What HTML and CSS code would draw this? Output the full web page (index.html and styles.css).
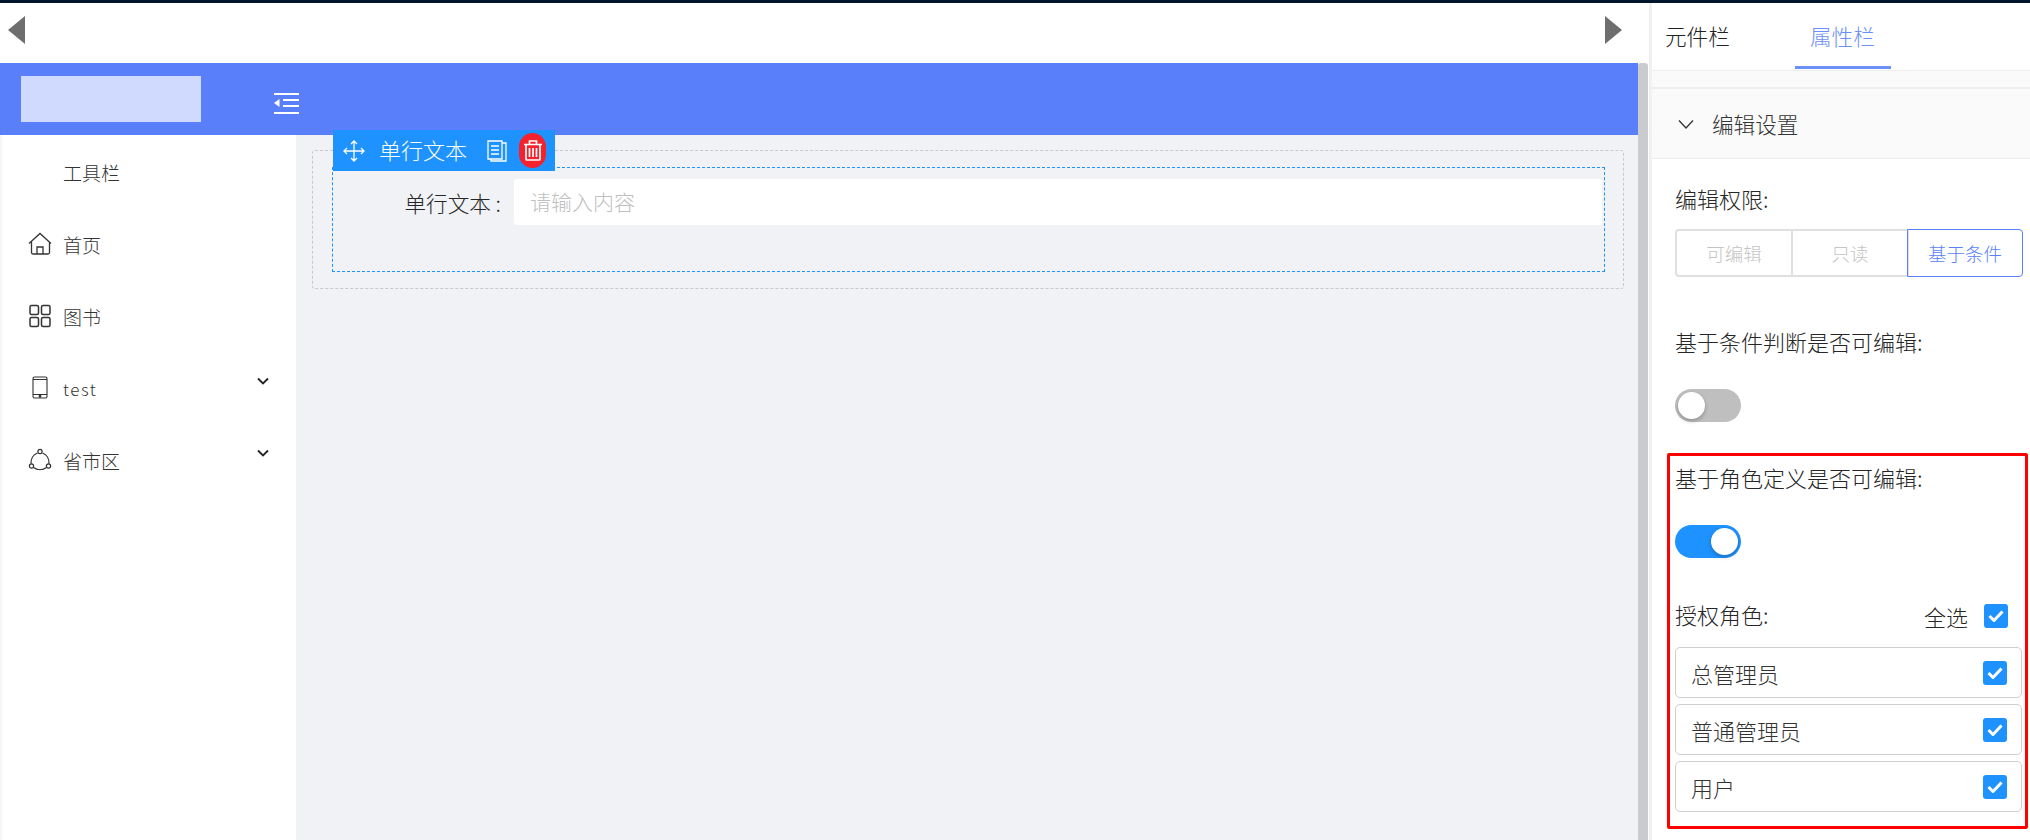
FILE: index.html
```html
<!DOCTYPE html>
<html lang="zh">
<head>
<meta charset="utf-8">
<title>表单设计</title>
<link rel="stylesheet" href="styles.css">
</head>
<body>
<div class="topline"></div>
<div class="app">
  <main class="stage">
    <div class="pager">
      <svg class="arrow" width="17" height="28" viewBox="0 0 17 28"><path d="M17 0V28L0 14Z" fill="#6e6e6e"/></svg>
      <svg class="arrow" width="17" height="28" viewBox="0 0 17 28"><path d="M0 0V28L17 14Z" fill="#6e6e6e"/></svg>
    </div>
    <div class="preview">
      <div class="preview-main">
        <header class="brandbar">
          <div class="logo"></div>
          <svg class="collapse" width="25" height="21" viewBox="0 0 25 21" fill="#fff">
            <rect x="0" y="0" width="25" height="2"/>
            <rect x="9" y="6" width="16" height="2"/>
            <rect x="9" y="12" width="16" height="2"/>
            <rect x="0" y="19" width="25" height="2"/>
            <path d="M5.5 6V14L0 10Z"/>
          </svg>
        </header>
        <div class="workspace">
          <nav class="sidebar">
            <div class="nav-item"><span class="nav-icon"></span><span class="nav-text">工具栏</span></div>
            <div class="nav-item">
              <svg class="nav-icon" viewBox="0 0 24 24" fill="none" stroke="#333" stroke-width="1.3"><path d="M1 11.5 12 1.5l11 10M3.5 10v10.5a1.5 1.5 0 0 0 1.500 1.500h15a1.500 1.500 0 0 0 1.500-1.500V10M9 22v-7h6v7"/></svg>
              <span class="nav-text">首页</span>
            </div>
            <div class="nav-item">
              <svg class="nav-icon" viewBox="0 0 24 24" fill="none" stroke="#333" stroke-width="1.500"><rect x="2" y="1.500" width="8.500" height="9" rx="1.500"/><rect x="13.500" y="1.500" width="8.500" height="9" rx="1.500"/><rect x="2" y="13.500" width="8.500" height="9" rx="1.500"/><rect x="13.500" y="13.500" width="8.500" height="9" rx="1.500"/></svg>
              <span class="nav-text">图书</span>
            </div>
            <div class="nav-item">
              <svg class="nav-icon" viewBox="0 0 24 24" fill="none" stroke="#333" stroke-width="1.100"><rect x="5" y="1" width="14" height="21" rx="1.500"/><path d="M5 3.500h14M5 18.500h14"/><circle cx="12" cy="20.300" r=".9" fill="#333"/></svg>
              <span class="nav-text nav-latin">test</span>
              <svg class="caret" width="12" height="8" viewBox="0 0 12 8" fill="none" stroke="#222" stroke-width="1.800"><path d="M1 1.500 6 6.500l5-5"/></svg>
            </div>
            <div class="nav-item">
              <svg class="nav-icon" viewBox="0 0 24 24" fill="none" stroke="#333" stroke-width="1.200"><circle cx="12" cy="3.500" r="2.100"/><circle cx="3.500" cy="18" r="2.100"/><circle cx="20.500" cy="18" r="2.100"/><path d="M9.500 5A10.500 10.500 0 0 0 3 15.800M14.500 5A10.500 10.500 0 0 1 21 15.800M5.500 19.500a10.500 10.500 0 0 0 13 0"/></svg>
              <span class="nav-text">省市区</span>
              <svg class="caret" width="12" height="8" viewBox="0 0 12 8" fill="none" stroke="#222" stroke-width="1.800"><path d="M1 1.500 6 6.500l5-5"/></svg>
            </div>
          </nav>
          <section class="canvas">
            <div class="drop-zone">
              <div class="field-box">
                <div class="field-tools">
                  <svg width="22" height="22" viewBox="0 0 22 22" fill="none" stroke="#fff" stroke-width="1.300"><path d="M11 1v20M1 11h20M8 4l3-3 3 3M8 18l3 3 3-3M4 8l-3 3 3 3M18 8l3 3-3 3"/></svg>
                  <span class="field-title">单行文本</span>
                  <svg class="copy-icon" width="20" height="22" viewBox="0 0 20 22" fill="none" stroke="#fff" stroke-width="1.300"><path d="M1 1h14v18H1zM15 3h4v18H4v-2M4 6h8M4 10h8M4 14h8"/></svg>
                  <span class="trash">
                    <svg width="18" height="21" viewBox="0 0 18 21" fill="none" stroke="#fff" stroke-width="1.700"><path d="M0 4.500h18M5.500 4.500V1h7v3.500M2 4.500V19a1 1 0 0 0 1 1h12a1 1 0 0 0 1-1V4.500M5.500 8v9M9 8v9M12.500 8v9"/></svg>
                  </span>
                </div>
                <div class="field-row">
                  <label class="field-label">单行文本 :</label>
                  <div class="field-input">请输入内容</div>
                </div>
              </div>
            </div>
          </section>
        </div>
      </div>
      <div class="scrollbar"></div>
    </div>
  </main>
  <aside class="panel">
    <div class="tabs">
      <span class="tab">元件栏</span>
      <span class="tab tab-active">属性栏</span>
    </div>
    <div class="strip"></div>
    <div class="group-head">
      <svg width="16" height="10" viewBox="0 0 16 10" fill="none" stroke="#333" stroke-width="1.300"><path d="M1 1.500 8 9l7-7.500"/></svg>
      <span>编辑设置</span>
    </div>
    <div class="group-body">
      <div class="prop-label">编辑权限:</div>
      <div class="segments">
        <span class="segment">可编辑</span>
        <span class="segment">只读</span>
        <span class="segment segment-on">基于条件</span>
      </div>
      <div class="prop-label cond-label">基于条件判断是否可编辑:</div>
      <div class="switch"><span class="knob"></span></div>
      <section class="role-box">
        <div class="prop-label">基于角色定义是否可编辑:</div>
        <div class="switch switch-on"><span class="knob"></span></div>
        <div class="role-head">
          <span class="prop-label">授权角色:</span>
          <span class="all"><span>全选</span>
            <span class="check"><svg width="16" height="12" viewBox="0 0 16 12" fill="none" stroke="#fff" stroke-width="3"><path d="M1.500 6 6 10.500 14.500 1.500"/></svg></span>
          </span>
        </div>
        <div class="role-row"><span>总管理员</span><span class="check"><svg width="16" height="12" viewBox="0 0 16 12" fill="none" stroke="#fff" stroke-width="3"><path d="M1.500 6 6 10.500 14.500 1.500"/></svg></span></div>
        <div class="role-row"><span>普通管理员</span><span class="check"><svg width="16" height="12" viewBox="0 0 16 12" fill="none" stroke="#fff" stroke-width="3"><path d="M1.500 6 6 10.500 14.500 1.500"/></svg></span></div>
        <div class="role-row"><span>用户</span><span class="check"><svg width="16" height="12" viewBox="0 0 16 12" fill="none" stroke="#fff" stroke-width="3"><path d="M1.500 6 6 10.500 14.500 1.500"/></svg></span></div>
      </section>
    </div>
  </aside>
</div>
</body>
</html>
```

FILE: styles.css
```css
* { box-sizing: border-box; }
html, body { margin: 0; height: 100%; overflow: hidden; }
body {
  display: flex;
  flex-direction: column;
  background: #fff;
  color: #262626;
  font-family: "Noto Sans CJK SC", "Noto Sans", sans-serif;
  font-weight: 300;
}
.topline { height: 3px; background: #001529; flex: none; }
.app { flex: 1; display: flex; min-height: 0; }

.stage { width: 1650px; flex: none; display: flex; flex-direction: column; border-right: 1px solid #eee; }
.pager { height: 60px; flex: none; display: flex; align-items: center; justify-content: space-between; padding: 0 27px 6px 8px; }
.preview { flex: 1; display: flex; min-height: 0; }
.preview-main { flex: 1; display: flex; flex-direction: column; min-width: 0; }
.scrollbar { width: 10px; margin-right: 1px; background: #c9cbcf; border-radius: 3px 3px 0 0; }

.brandbar { height: 72px; flex: none; background: #5a7ffa; display: flex; align-items: center; padding-left: 21px; }
.logo { width: 180px; height: 46px; background: #d0daff; }
.collapse { margin: 9px 0 0 73px; }

.workspace { flex: 1; display: flex; min-height: 0; }
.sidebar { width: 296px; flex: none; background: #fff; border-left: 2px solid #f6f6f6; padding-top: 1px; }
.nav-item { height: 72px; display: flex; align-items: center; padding-left: 26px; position: relative; font-size: 19px; color: #333; }
.nav-icon { width: 24px; height: 24px; flex: none; margin-right: 11px; }
.nav-latin { letter-spacing: 1.500px; font-size: 17px; }
.caret { position: absolute; left: 255px; top: 25px; }

.canvas { flex: 1; background: #f0f2f5; padding: 15px 14px 15px 16px; min-width: 0; }
.drop-zone { height: 139px; border: 1px dashed #c8c8c8; border-radius: 3px; padding: 16px 18px 0 19px; }
.field-box { height: 105px; border: 1px dashed #1e92ff; position: relative; padding-top: 11px; }
.field-tools {
  position: absolute; left: 0; top: -38px;
  width: 222px; height: 41px;
  background: #1e92ff; color: #fff;
  display: flex; align-items: center;
  padding-left: 10px;
  font-size: 22px;
}
.field-title { margin-left: 14px; line-height: 38px; height: 41px; }
.copy-icon { margin-left: 20px; }
.trash {
  margin-left: 12px; width: 27px; height: 35px;
  background: #f5222d; border-radius: 14px;
  display: flex; align-items: center; justify-content: center;
}
.field-row { display: flex; align-items: center; }
.field-label { width: 181px; text-align: right; font-size: 21.6px; padding-right: 13px; white-space: nowrap; }
.field-input {
  flex: 1; height: 46px; margin-right: 2px;
  background: #fff; border-radius: 3px;
  color: #bfbfbf; font-size: 21px;
  display: flex; align-items: center; padding: 0 0 2px 16px;
}

.panel { flex: 1; min-width: 0; border-left: 2px solid #f1f1f1; }
.tabs { height: 67px; display: flex; padding-left: 13px; gap: 66px; font-size: 21.6px; color: #222; }
.tab { height: 66px; padding: 17px 0 0 0; width: 64px; white-space: nowrap; line-height: 32px; }
.tab-active { width: 96px; padding-left: 15px; color: #6d8ffb; border-bottom: 3px solid #6d8ffb; }
.strip { height: 19px; background: #fafafa; border-top: 1px solid #eee; border-bottom: 2px solid #eee; }
.group-head {
  height: 70px; background: #fafafa; border-bottom: 1px solid #ececec;
  display: flex; align-items: center; gap: 18px;
  padding-left: 26px; font-size: 21.6px; color: #333;
}
.group-body { padding: 23px 0 0 23px; }
.prop-label { font-size: 22px; line-height: 32px; color: #262626; }
.segments { display: flex; width: 348px; height: 48px; margin-top: 15px; }
.segment {
  flex: 1; display: flex; align-items: center; justify-content: center;
  border: 2px solid #e0e0e0; margin-left: -2px;
  color: #c4c4c4; font-size: 18.500px;
}
.segment:first-child { margin-left: 0; border-radius: 4px 0 0 4px; }
.segment-on { border: 1.500px solid #5a7ffa; color: #5a7ffa; border-radius: 0 4px 4px 0; z-index: 1; }
.cond-label { margin-top: 48px; }
.switch {
  width: 66px; height: 33px; margin-top: 32px;
  border-radius: 17px; background: #bfbfbf;
  padding: 3px; display: flex;
}
.knob { width: 27px; height: 27px; border-radius: 50%; background: #fff; box-shadow: 0 2px 4px rgba(0,0,0,.25); }
.switch-on { background: #1e92ff; justify-content: flex-end; }
.role-box {
  width: 361px; height: 376px; margin: 31px 0 0 -8px;
  border: 3px solid #f00; border-radius: 2px;
  padding: 5px 0 0 5px;
}
.role-head { display: flex; justify-content: space-between; align-items: flex-start; width: 333px; margin-top: 40px; }
.all { display: flex; align-items: center; font-size: 22px; gap: 16px; margin-top: 2px; }
.check {
  width: 24px; height: 24px; border-radius: 3px; background: #1e92ff;
  display: flex; align-items: center; justify-content: center; flex: none;
}
.role-row {
  width: 347px; height: 51px; margin-top: 6px;
  border: 1px solid #cfcfcf; border-radius: 5px;
  display: flex; align-items: center; justify-content: space-between;
  padding: 0 14px 0 15px; font-size: 22px; color: #333;
}
.role-head + .role-row { margin-top: 15px; }
```
